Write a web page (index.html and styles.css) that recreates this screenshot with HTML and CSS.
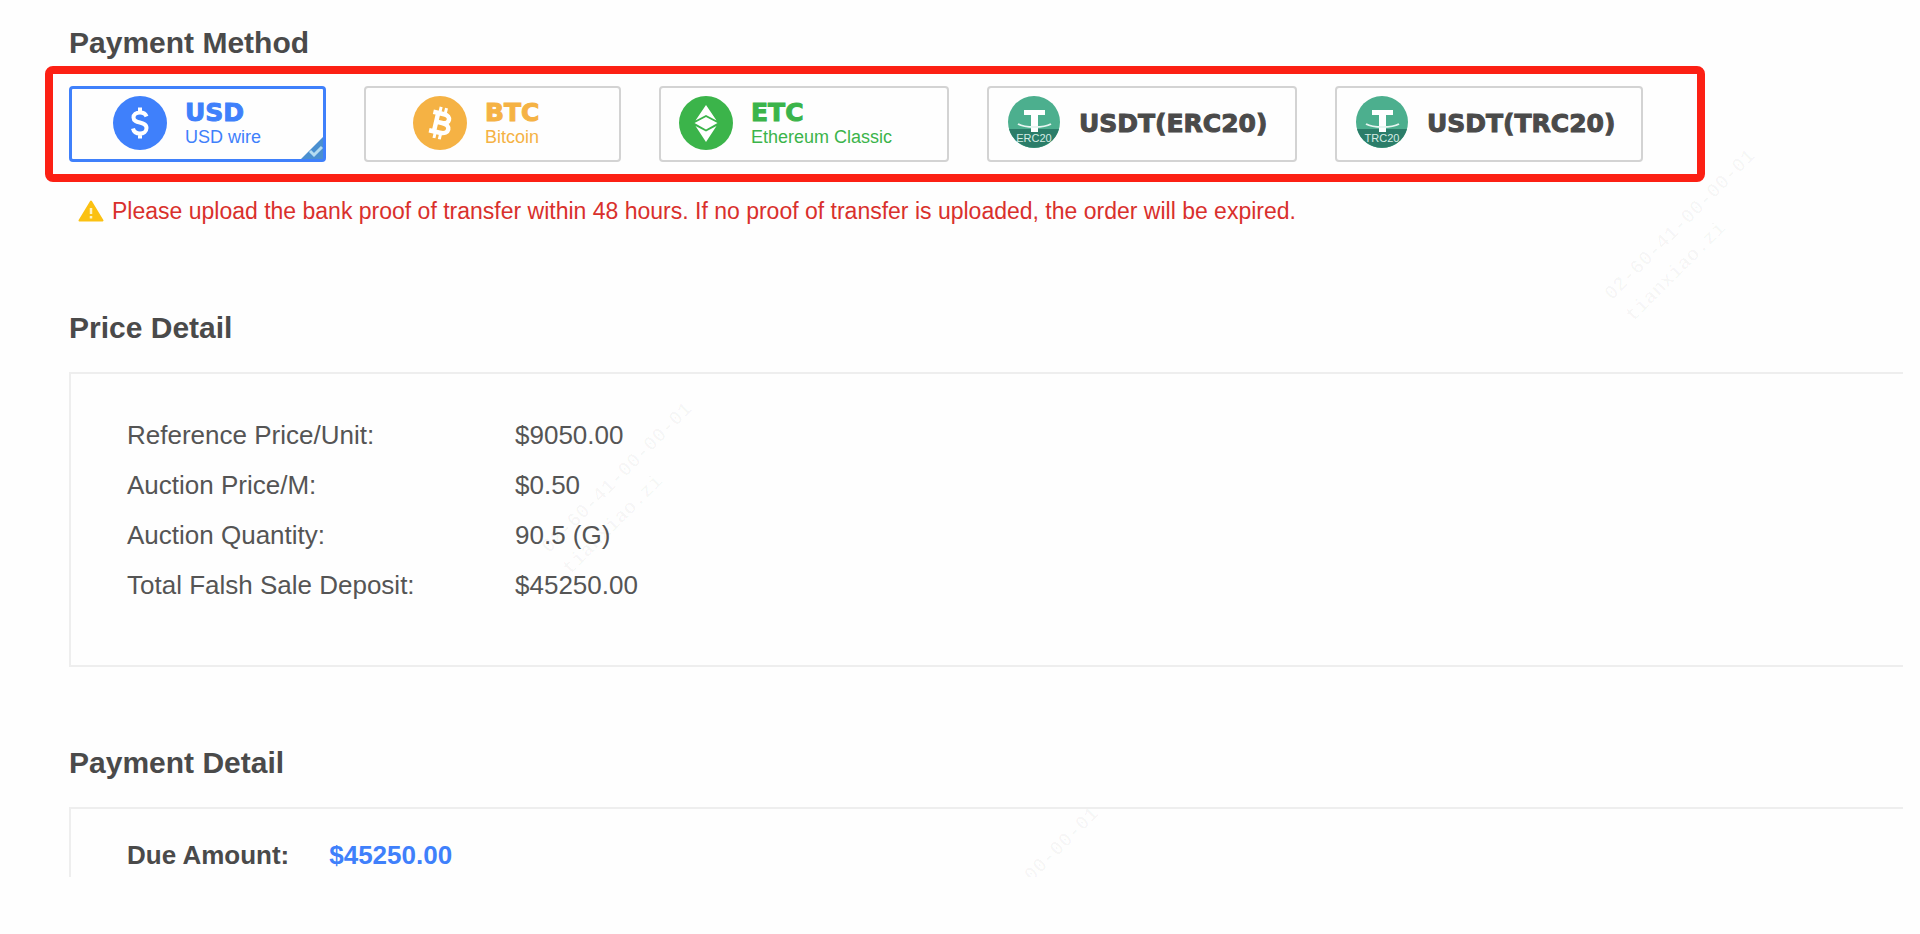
FILE: index.html
```html
<!DOCTYPE html>
<html lang="en">
<head>
  <meta charset="UTF-8" />
  <meta name="viewport" content="width=device-width, initial-scale=1.0" />
  <title>Payment</title>
  <link rel="stylesheet" href="styles.css">
</head>
<body>
  <main class="page">
    <section class="section">
      <h2>Payment Method</h2>
      <div class="methods">
        <button type="button" class="method usd active" aria-pressed="true">
          <svg class="coin" viewBox="0 0 54 54" aria-hidden="true">
            <circle cx="27" cy="27" r="27" fill="#3f80fb"/>
            <path d="M33.500 20.500C32.500 17.500 30 16.500 27 16.500C23 16.500 20.500 18.500 20.500 21.500C20.500 28.500 33.500 24.500 33.500 32C33.500 35.500 30.500 37.500 27 37.500C23.500 37.500 20.700 35.800 20 32.500M27 11.500V16.500M27 37.500V42.500" fill="none" stroke="#fff" stroke-width="4"/>
          </svg>
          <span class="label"><b>USD</b><small>USD wire</small></span>
          <svg class="tick" viewBox="0 0 22 22" aria-hidden="true">
            <path d="M22 0V22H0Z" fill="#4a8fd0"/>
            <path d="M9 14L13 18L21 10" fill="none" stroke="#b5dcf0" stroke-width="3"/>
          </svg>
        </button>
        <button type="button" class="method btc" aria-pressed="false">
          <svg class="coin" viewBox="0 0 54 54" aria-hidden="true">
            <circle cx="27" cy="27" r="27" fill="#f5b244"/>
            <g transform="rotate(13 27 27)" fill="none" stroke="#fff">
              <path d="M18 17.500H29C37 17.500 37 26.500 29 26.500H23M29 26.500C39 26.500 39 36.500 29 36.500H18M23 17.500V36.500" stroke-width="4.500"/>
              <path d="M24.500 11V17M30 11V17M24.500 37V43M30 37V43" stroke-width="3"/>
            </g>
          </svg>
          <span class="label"><b>BTC</b><small>Bitcoin</small></span>
        </button>
        <button type="button" class="method etc" aria-pressed="false">
          <svg class="coin" viewBox="0 0 54 54" aria-hidden="true">
            <circle cx="27" cy="27" r="27" fill="#3bb44a"/>
            <path d="M27 9L37.500 24.500L27 19L16.500 24.500ZM27 21L38.500 27L27 33.500L15.500 27ZM16.500 30L27 35.500L37.500 30L27 46Z" fill="#fff"/>
          </svg>
          <span class="label"><b>ETC</b><small>Ethereum Classic</small></span>
        </button>
        <button type="button" class="method erc" aria-pressed="false">
          <svg class="coin" viewBox="0 0 54 54" aria-hidden="true">
            <circle cx="27" cy="26" r="26" fill="#4caf8e"/>
            <path d="M2 33H52A26 26 0 0 1 2 33Z" fill="#2b7d69"/>
            <path d="M17 14H38V19H31V36H24V19H17Z" fill="#fff"/>
            <path d="M11 28C18 32 37 32 44 28" fill="none" stroke="#e6f5f0" stroke-width="2"/>
            <text x="27" y="46" class="coin-text">ERC20</text>
          </svg>
          <span class="label"><b>USDT(ERC20)</b></span>
        </button>
        <button type="button" class="method trc" aria-pressed="false">
          <svg class="coin" viewBox="0 0 54 54" aria-hidden="true">
            <circle cx="27" cy="26" r="26" fill="#4caf8e"/>
            <path d="M2 33H52A26 26 0 0 1 2 33Z" fill="#2b7d69"/>
            <path d="M17 14H38V19H31V36H24V19H17Z" fill="#fff"/>
            <path d="M11 28C18 32 37 32 44 28" fill="none" stroke="#e6f5f0" stroke-width="2"/>
            <text x="27" y="46" class="coin-text">TRC20</text>
          </svg>
          <span class="label"><b>USDT(TRC20)</b></span>
        </button>
      </div>
      <p class="warning">
        <svg viewBox="0 0 26 22" aria-hidden="true">
          <path d="M13 1.500L24.500 20.500H1.500Z" fill="#fbc112" stroke="#fbc112" stroke-width="2" stroke-linejoin="round"/>
          <path d="M13 8V14M13 16V18.500" stroke="#fff3c4" stroke-width="2.500"/>
        </svg>
        Please upload the bank proof of transfer within 48 hours. If no proof of transfer is uploaded, the order will be expired.
      </p>
    </section>

    <section class="section">
      <h2>Price Detail</h2>
      <dl class="panel price">
        <dt>Reference Price/Unit:</dt><dd>$9050.00</dd>
        <dt>Auction Price/M:</dt><dd>$0.50</dd>
        <dt>Auction Quantity:</dt><dd>90.5 (G)</dd>
        <dt>Total Falsh Sale Deposit:</dt><dd>$45250.00</dd>
      </dl>
    </section>

    <section class="section">
      <h2>Payment Detail</h2>
      <div class="panel due">
        <span>Due Amount:</span>
        <strong>$45250.00</strong>
      </div>
    </section>

    <!-- watermark -->
    <div class="mark mark-1" aria-hidden="true">02-60-41-00-00-01<br>tianxiao.zi</div>
    <div class="mark mark-2" aria-hidden="true">02-60-41-00-00-01<br>tianxiao.zi</div>
    <div class="mark mark-3" aria-hidden="true">00-00-01</div>
  </main>
</body>
</html>
```
FILE: styles.css
```css
* {
  box-sizing: border-box;
}
body {
  margin: 0;
  font-family: Arial, 'Liberation Sans', sans-serif;
  background: #fefefe;
  color: #4a4a4a;
}
.page {
  position: relative;
  padding: 25px 17px 0 69px;
}
h2 {
  margin: 0;
  font-size: 30px;
  line-height: 36px;
}
.methods {
  display: flex;
  gap: 38px;
  width: fit-content;
  margin: 5px 0 0 -24px;
  padding: 12px 54px 12px 16px;
  border: 8px solid #fc2014;
  border-radius: 8px;
}
.method {
  position: relative;
  display: flex;
  align-items: center;
  gap: 18px;
  height: 76px;
  padding: 0 18px 2px;
  border: 2px solid #d3d3d3;
  border-radius: 4px;
  background: none;
  color: inherit;
  font-family: inherit;
  text-align: left;
}
.method.active {
  border: 3px solid #3f80fb;
}
.usd {
  width: 257px;
  padding-left: 41px;
  color: #3f80fb;
}
.btc {
  width: 257px;
  padding-left: 47px;
  color: #f5b244;
}
.etc {
  width: 290px;
  color: #3bb44a;
}
.erc {
  width: 310px;
}
.trc {
  width: 308px;
}
.coin {
  width: 54px;
  height: 54px;
  flex: none;
}
.coin-text {
  font-size: 11px;
  fill: #d5ece5;
  text-anchor: middle;
}
.label {
  display: flex;
  flex-direction: column;
  padding-top: 2px;
}
.label b {
  font-family: 'Arial Black', 'DejaVu Sans', sans-serif;
  font-size: 25px;
  font-weight: 900;
  line-height: 26px;
  -webkit-text-stroke: 1px currentColor;
}
.label small {
  font-size: 18px;
  line-height: 22px;
}
.tick {
  position: absolute;
  right: 0;
  bottom: 0;
  width: 22px;
  height: 22px;
}
.warning {
  display: flex;
  align-items: center;
  gap: 8px;
  margin: 16px 0 86px 9px;
  color: #d9302c;
  font-size: 23px;
  line-height: 26px;
}
.warning svg {
  width: 26px;
  height: 22px;
}
.panel {
  margin: 26px 0 78px;
  border: 2px solid #eee;
  border-right: 0;
  font-size: 26px;
}
.price {
  display: grid;
  grid-template-columns: 388px 1fr;
  padding: 36px 56px 55px;
  color: #555;
  line-height: 50px;
}
.price dd {
  margin: 0;
}
.due {
  display: flex;
  gap: 40px;
  height: 70px;
  margin-bottom: 0;
  padding: 31px 56px 0;
  border-bottom: 0;
  font-weight: bold;
  line-height: 30px;
}
.due strong {
  color: #3f80fb;
}
.mark {
  position: absolute;
  color: rgba(0, 0, 0, 0.03);
  font-family: 'Liberation Mono', monospace;
  font-size: 20px;
  font-weight: bold;
  line-height: 30px;
  white-space: nowrap;
  transform: rotate(-45deg);
  pointer-events: none;
}
.mark-1 {
  left: 1589px;
  top: 206px;
}
.mark-2 {
  left: 526px;
  top: 459px;
}
.mark-3 {
  left: 1014px;
  top: 830px;
}
```
